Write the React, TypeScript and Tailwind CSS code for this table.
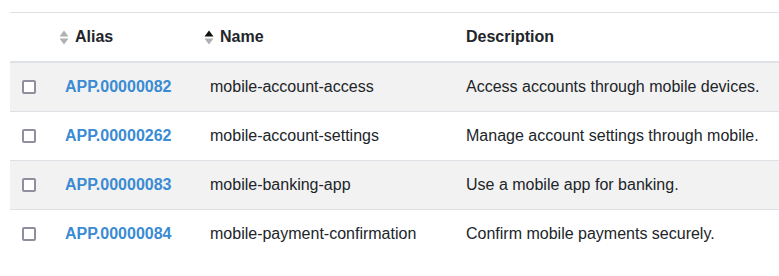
import React from "react";

const rows = [
  { alias: "APP.00000082", name: "mobile-account-access", desc: "Access accounts through mobile devices." },
  { alias: "APP.00000262", name: "mobile-account-settings", desc: "Manage account settings through mobile." },
  { alias: "APP.00000083", name: "mobile-banking-app", desc: "Use a mobile app for banking." },
  { alias: "APP.00000084", name: "mobile-payment-confirmation", desc: "Confirm mobile payments securely." },
];

function SortIcon({ up }: { up: boolean }) {
  return (
    <svg width="10" height="15" viewBox="0 0 10 15" className="mr-[6px] ml-[-6px] shrink-0">
      <path d="M5 0.5 L9.5 6.5 L0.5 6.5 Z" fill={up ? "#111111" : "#b0b0b0"} />
      <path d="M0.5 8.5 L9.5 8.5 L5 14.5 Z" fill="#b0b0b0" />
    </svg>
  );
}

function Box() {
  return <span className="block w-[14px] h-[14px] border-2 border-[#8f8f9d] rounded-[2px] bg-white" />;
}

export default function App() {
  return (
    <div className="bg-white w-[779px] h-[276px] overflow-hidden pt-[12px] pl-[10px] font-['Liberation_Sans',Arial,sans-serif] text-[16px] leading-[24px] text-[#212529]">
      <table className="border-collapse w-[800px] table-fixed">
        <colgroup>
          <col className="w-[43px]" />
          <col className="w-[145px]" />
          <col className="w-[256px]" />
          <col />
        </colgroup>
        <thead>
          <tr className="border-t border-[#dee2e6] border-b-2 border-b-[#dee2e6]">
            <th className="px-[12px] py-[12px]" />
            <th className="px-[12px] py-[12px] text-left font-bold">
              <div className="flex items-center">
                <SortIcon up={false} />
                <span>Alias</span>
              </div>
            </th>
            <th className="px-[12px] py-[12px] text-left font-bold">
              <div className="flex items-center">
                <SortIcon up={true} />
                <span>Name</span>
              </div>
            </th>
            <th className="px-[12px] py-[12px] text-left font-bold">Description</th>
          </tr>
        </thead>
        <tbody>
          {rows.map((r, i) => (
            <tr
              key={r.alias}
              className={`${i % 2 === 0 ? "bg-[#f2f2f2]" : "bg-white"} ${i < rows.length - 1 ? "border-b border-[#dee2e6]" : ""}`}
            >
              <td className="px-[12px] py-[12px] align-middle">
                <Box />
              </td>
              <td className="px-[12px] py-[12px] font-bold text-[#3a8bd3] whitespace-nowrap">{r.alias}</td>
              <td className="px-[12px] py-[12px] whitespace-nowrap">{r.name}</td>
              <td className="px-[12px] py-[12px] whitespace-nowrap">{r.desc}</td>
            </tr>
          ))}
        </tbody>
      </table>
    </div>
  );
}
